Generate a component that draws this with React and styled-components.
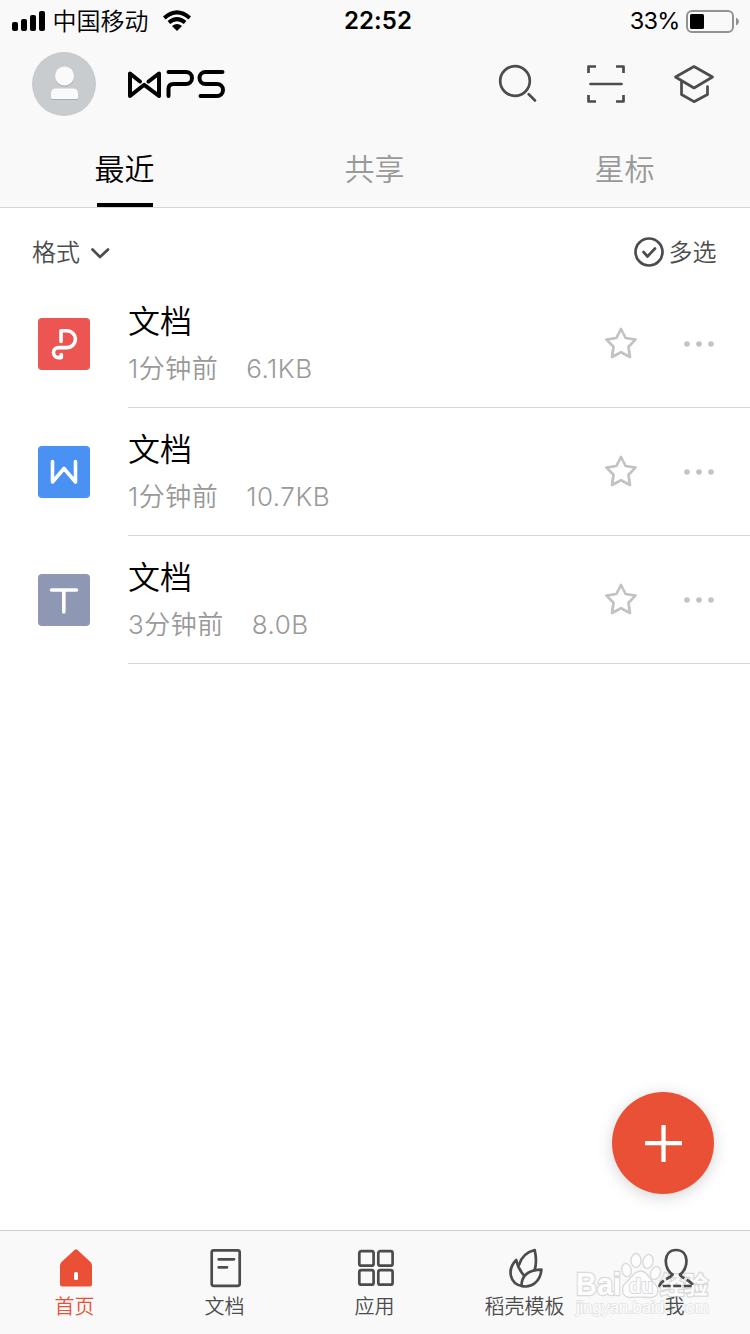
import React from 'react';
import styled, { createGlobalStyle } from 'styled-components';

const colors = {
  accent: '#ea5036',
  bar: '#f9f9f9',
  icon: '#4c4c4c',
  muted: '#999999',
  faint: '#c2c2c2',
  line: '#d6d6d6',
};

const GlobalStyle = createGlobalStyle`
  body {
    margin: 0;
    background: #ffffff;
    font-family: Inter, "Noto Sans CJK SC", sans-serif;
    font-weight: 350;
  }
`;

const Screen = styled.div`
  position: relative;
  display: flex;
  flex-direction: column;
  width: 750px;
  height: 1334px;
  overflow: hidden;
  background: #ffffff;
`;

const Header = styled.header`
  box-sizing: border-box;
  height: 208px;
  background: ${colors.bar};
  border-bottom: 1px solid ${colors.line};
`;

const StatusBar = styled.div`
  display: grid;
  grid-template-columns: 1fr 70px 1fr;
  align-items: center;
  height: 40px;
  padding: 0 11px 0 12px;
  font-size: 24px;
  line-height: 42px;
  color: #000000;
`;

const StatusGroup = styled.div`
  display: flex;
  align-items: center;
  justify-content: ${props => props.$end ? 'flex-end' : 'flex-start'};
  height: 40px;
`;

const Carrier = styled.span`
  height: 40px;
  margin: 0 14px 0 7.5px;
  line-height: 42px;
`;

const Clock = styled.span`
  padding-left: 3.5px;
  font-weight: 600;
  letter-spacing: 0.1px;
  white-space: nowrap;
`;

const Percent = styled.span`
  margin-right: 4.5px;
  font-size: 23.5px;
  font-weight: 400;
  letter-spacing: -0.8px;
`;

const TitleBar = styled.div`
  display: flex;
  align-items: center;
  height: 88px;
  padding: 0 32px;
`;

const Avatar = styled.div`
  width: 64px;
  height: 64px;
  margin-right: 30px;
  border-radius: 50%;
  background: #c8cccf;
`;

const Actions = styled.div`
  display: flex;
  gap: 44px;
  margin: 0 2px 0 auto;
`;

const Svg = styled.svg`
  display: block;
  flex: none;
  fill: none;
  stroke: ${props => props.$color || colors.icon};
  stroke-width: ${props => props.$stroke || 2.7};
  stroke-linecap: round;
  stroke-linejoin: round;
`;

const Tabs = styled.nav`
  display: grid;
  grid-template-columns: repeat(3, 250px);
  height: 79px;
`;

const Tab = styled.div`
  display: flex;
  flex-direction: column;
  align-items: center;
  justify-content: space-between;
  font-size: 30px;
  line-height: 82px;
  color: ${props => props.$active ? '#000000' : colors.muted};
`;

const TabText = styled.span`
  height: 75px;
  margin-right: 1px;
`;

const Underline = styled.span`
  width: 56px;
  height: 4px;
  background: #000000;
`;

const FilterBar = styled.div`
  display: flex;
  align-items: center;
  justify-content: space-between;
  box-sizing: border-box;
  height: 72px;
  padding: 16px 33.5px 0 32px;
`;

const FilterItem = styled.div`
  display: flex;
  align-items: center;
  gap: ${props => props.$gap}px;
  height: 56px;
  font-size: 24px;
  line-height: 58px;
  color: ${colors.icon};
`;

const FilterText = styled.span`
  padding-top: 2px;
`;

const FileList = styled.main`
  flex: 1;
`;

const FileRow = styled.div`
  display: flex;
  align-items: stretch;
  height: 128px;
  padding-left: 38px;
`;

const FileIcon = styled.div`
  width: 52px;
  height: 52px;
  margin: 38px 38px 0 0;
  border-radius: 4px;
  background: ${props => props.$color};
`;

const FileBody = styled.div`
  display: flex;
  flex: 1;
  align-items: center;
  box-sizing: border-box;
  padding-right: 35px;
  border-bottom: 1px solid ${colors.line};
`;

const FileText = styled.div`
  flex: 1;
  height: 127px;
`;

const FileName = styled.div`
  padding-top: 19px;
  font-size: 32px;
  line-height: 46px;
  color: #000000;
`;

const FileMeta = styled.div`
  display: flex;
  gap: 28px;
  font-size: 26px;
  line-height: 47px;
  letter-spacing: 0.5px;
  color: ${colors.muted};
`;

const StarIcon = styled(Svg)`
  margin: 0 45px 2px 0;
`;

const AddButton = styled.button`
  position: absolute;
  right: 36px;
  top: 1092px;
  display: flex;
  align-items: center;
  justify-content: center;
  width: 102px;
  height: 102px;
  padding: 0;
  border: 0;
  border-radius: 50%;
  background: ${colors.accent};
  box-shadow: 0 3px 16px rgba(0, 0, 0, 0.17);
`;

const BottomBar = styled.nav`
  position: relative;
  display: grid;
  grid-template-columns: repeat(5, 150px);
  box-sizing: border-box;
  height: 104px;
  border-top: 1px solid #cfcfcf;
  background: ${colors.bar};
`;

const BottomItem = styled.div`
  position: relative;
  z-index: 1;
  display: flex;
  flex-direction: column;
  align-items: center;
  padding-top: 17px;
  font-size: 20px;
  line-height: 39px;
  color: ${props => props.$active ? colors.accent : colors.icon};
`;

const BottomLabel = styled.span`
  margin-right: 1px;
`;

const Watermark = styled.div`
  position: absolute;
  left: 572px;
  top: 17px;
  width: 142px;
  height: 72px;
`;

const FilePaths = {
  pdf: 'M23 23.500V12.800H29a8.400 8.400 0 0 1 0 16.800H20.500a5 5 0 0 0 0 10H23.300V36.500',
  word: 'M14.500 15.500V36L26 22.500L37.500 36V15.500',
  text: 'M13.500 16H38.500M25.800 16V38',
};

const files = [
  { type: 'pdf', color: '#ed5552', name: '文档', time: '1分钟前', size: '6.1KB' },
  { type: 'word', color: '#4991f2', name: '文档', time: '1分钟前', size: '10.7KB' },
  { type: 'text', color: '#8e98b5', name: '文档', time: '3分钟前', size: '8.0B' },
];

const Signal = () => (
  <svg width="33" height="40" viewBox="0 0 33 40">
    <rect x="0" y="21" width="6" height="9" rx="2" />
    <rect x="9" y="18" width="6" height="12" rx="2" />
    <rect x="18" y="14" width="6" height="16" rx="2" />
    <rect x="27" y="10" width="6" height="20" rx="2" />
  </svg>
);

const Wifi = () => (
  <Svg width="28" height="40" viewBox="0 0 28 40" $color="#000000" $stroke="4">
    <path strokeLinecap="butt" d="M1.300 16.900Q14 6 26.700 16.900M5.900 21.500Q14 14.700 22.100 21.500" />
    <path stroke="none" fill="#000000" d="M9 24.900Q14 21.200 19 24.900L14 29.900Z" />
  </Svg>
);

const Battery = () => (
  <svg width="55" height="40" viewBox="0 0 55 40">
    <rect x="3" y="10" width="46" height="21" rx="5" fill="none" stroke="#929292" strokeWidth="2" />
    <rect x="6" y="13" width="14" height="15" rx="1.500" />
    <path d="M52 16.500Q55 18 55 20.500T52 24.500Z" fill="#929292" />
  </svg>
);

const Logo = () => (
  <Svg width="104" height="36" viewBox="0 0 104 36" $color="#000000" $stroke="4">
    <path d="M14 15.500L4 7.500V30L18.200 18.800L33 30V7.500L22.500 15.500" />
    <path d="M42.500 6H60a6 6 0 0 1 0 12H47.500q-5 0-5 5V30" />
    <path d="M96.500 6H79.500a6 6 0 0 0 0 12H91a6 6 0 0 1 0 12H74.500" />
  </Svg>
);

const TabIcons = {
  home: (
    <g stroke="none">
      <path fill={colors.accent} d="M5 17.500V36q0 2.500 2.500 2.500h27q2.500 0 2.500-2.500V17.500q0-2-1.500-3.500L22.500 2Q21 .7 19.500 2L6.500 14Q5 15.500 5 17.500Z" />
      <rect fill="#ffffff" x="19" y="24" width="4" height="8" rx="1.500" />
    </g>
  ),
  docs: (
    <g>
      <rect x="6.700" y="2.300" width="28" height="35.500" rx="2" />
      <path d="M13.700 11.300H29M13.700 19.300H22" />
    </g>
  ),
  apps: (
    <g>
      <rect x="4.300" y="3.200" width="14.300" height="14.500" rx="2" />
      <rect x="23.300" y="3.200" width="14.300" height="14.500" rx="2" />
      <rect x="4.300" y="22.200" width="14.300" height="14.500" rx="2" />
      <rect x="23.300" y="22.200" width="14.300" height="14.500" rx="2" />
    </g>
  ),
  templates: (
    <g>
      <path d="M14 17C16 10 21.500 4 29.700 2C31 8 31.500 16 29.700 22" />
      <path d="M17 38C5 36 1.500 22 11.200 12C12.500 18 14.500 22.500 18.700 27" />
      <path d="M16.500 38C16.500 28 23 21.800 36.400 21.600C35.500 33 27 40.500 16.500 38Z" />
    </g>
  ),
  me: (
    <g>
      <path d="M17.500 26.500C8.500 21 7.500 2 21.200 2S33.500 21 25 26.500" />
      <path strokeLinecap="butt" strokeDasharray="8 2.500" d="M17.500 26.500C16 30 5 32.500 4.500 38H38C37.500 33 25.500 30 25 26.500" />
    </g>
  ),
};

const bottomItems = [
  { icon: 'home', label: '首页' },
  { icon: 'docs', label: '文档' },
  { icon: 'apps', label: '应用' },
  { icon: 'templates', label: '稻壳模板' },
  { icon: 'me', label: '我' },
];

const PageHeader = () => (
  <Header>
    <StatusBar>
      <StatusGroup>
        <Signal />
        <Carrier>中国移动</Carrier>
        <Wifi />
      </StatusGroup>
      <Clock>22:52</Clock>
      <StatusGroup $end>
        <Percent>33%</Percent>
        <Battery />
      </StatusGroup>
    </StatusBar>
    <TitleBar>
      <Avatar>
        <svg width="64" height="64" viewBox="0 0 64 64">
          <g fill="#a9adb0" transform="translate(0 1)">
            <circle cx="32.500" cy="24" r="9.500" />
            <path d="M19 45.500V41.500q0-5 5-5h17q5 0 5 5v4q0 1.500-1.500 1.500h-24Q19 47 19 45.500Z" />
          </g>
          <g fill="#fafafa">
            <circle cx="32.500" cy="24" r="9.500" />
            <path d="M19 45.500V41.500q0-5 5-5h17q5 0 5 5v4q0 1.500-1.500 1.500h-24Q19 47 19 45.500Z" />
          </g>
        </svg>
      </Avatar>
      <Logo />
      <Actions>
        <Svg width="44" height="44" viewBox="0 0 44 44">
          <circle cx="19" cy="19" r="14.800" />
          <path d="M32.700 32.300L39 38.500" />
        </Svg>
        <Svg width="44" height="44" viewBox="0 0 44 44">
          <path strokeLinecap="butt" d="M4.500 11V4.500H12M32 4.500H39.500V11M4.500 33V39.500H12M32 39.500H39.500V33" />
          <path d="M6.500 22H37.500" />
        </Svg>
        <Svg width="44" height="44" viewBox="0 0 44 44">
          <path d="M3.500 15L22 4.500L40.500 15L22 26Z" />
          <path d="M9.500 19.500V32.500L22 39.700L35.500 32.500V24.500" />
        </Svg>
      </Actions>
    </TitleBar>
    <Tabs>
      {['最近', '共享', '星标'].map((text, i) => (
        <Tab key={text} $active={i === 0}>
          <TabText>{text}</TabText>
          {i === 0 ? <Underline /> : null}
        </Tab>
      ))}
    </Tabs>
  </Header>
);

const File = ({ type, color, name, time, size }) => (
  <FileRow>
    <FileIcon $color={color}>
      <Svg width="52" height="52" viewBox="0 0 52 52" $color="#ffffff" $stroke="3.6">
        <path d={FilePaths[type]} />
      </Svg>
    </FileIcon>
    <FileBody>
      <FileText>
        <FileName>{name}</FileName>
        <FileMeta>
          <span>{time}</span>
          <span>{size}</span>
        </FileMeta>
      </FileText>
      <StarIcon width="34" height="34" viewBox="0 0 34 34" $color={colors.faint}>
        <path d="M17 3L21.600 12L31.500 13.600L24.500 20.800L26 31L17 26.300L8 31L9.500 20.800L2.500 13.600L12.400 12Z" />
      </StarIcon>
      <svg width="32" height="8" viewBox="0 0 32 8" fill={colors.faint}>
        <circle cx="4" cy="4" r="2.800" />
        <circle cx="16" cy="4" r="2.800" />
        <circle cx="28" cy="4" r="2.800" />
      </svg>
    </FileBody>
  </FileRow>
);

const BaiduMark = () => (
  <Watermark>
    <svg width="142" height="72" viewBox="0 0 142 72" fill="#fdfdfd" stroke="#dadada" strokeWidth="1.400">
      <ellipse cx="54.500" cy="22" rx="4.700" ry="6.700" transform="rotate(-12 54.500 22)" />
      <ellipse cx="64" cy="12.500" rx="5" ry="7" />
      <ellipse cx="76" cy="13.500" rx="5" ry="7" transform="rotate(12 76 13.500)" />
      <ellipse cx="83.500" cy="25" rx="4.700" ry="6.700" transform="rotate(24 83.500 25)" />
      <path d="M68.500 23c7 0 8.500 8 13.500 12s6 14-3 14.500c-5 0-15.500-1-21 0-9 0-9-11-4-15s7.500-11.500 14.500-11.500Z" />
      <g fontFamily="Liberation Sans, sans-serif" fontWeight="700" paintOrder="stroke">
        <text x="4" y="47" fontSize="32" strokeWidth="2.600" textLength="45" lengthAdjust="spacingAndGlyphs">Bai</text>
        <text x="57" y="45" fontSize="21" textLength="24" strokeWidth="2" lengthAdjust="spacingAndGlyphs">du</text>
        <text x="88" y="46" fontSize="24" strokeWidth="2.600" fontFamily="Noto Sans CJK SC, sans-serif">经验</text>
        <text x="4" y="65" fontSize="17" fontWeight="400" textLength="133" strokeWidth="1.600" stroke="#e3e3e3">jingyan.baidu.com</text>
      </g>
    </svg>
  </Watermark>
);

export default function App() {
  return (
    <Screen>
      <GlobalStyle />
      <PageHeader />
      <FilterBar>
        <FilterItem $gap={11}>
          <FilterText>格式</FilterText>
          <Svg width="20" height="14" viewBox="0 0 20 14">
            <path d="M1.500 4.500L9 12L17 4.500" />
          </Svg>
        </FilterItem>
        <FilterItem $gap={4}>
          <Svg width="32" height="32" viewBox="0 0 32 32">
            <circle cx="16" cy="16" r="13.500" />
            <path d="M10.500 16L14.500 20.500L22 12.500" />
          </Svg>
          <FilterText>多选</FilterText>
        </FilterItem>
      </FilterBar>
      <FileList>
        {files.map(file => <File key={file.type} {...file} />)}
      </FileList>
      <BottomBar>
        <BaiduMark />
        {bottomItems.map(({ icon, label }, i) => (
          <BottomItem key={icon} $active={i === 0}>
            <Svg width="40" height="40" viewBox="0 0 40 40">{TabIcons[icon]}</Svg>
            <BottomLabel>{label}</BottomLabel>
          </BottomItem>
        ))}
      </BottomBar>
      <AddButton aria-label="新建">
        <Svg width="40" height="40" viewBox="0 0 40 40" $color="#ffffff" $stroke="4.3">
          <path strokeLinecap="butt" d="M2 20.200H39M20.500 2V39" />
        </Svg>
      </AddButton>
    </Screen>
  );
}
